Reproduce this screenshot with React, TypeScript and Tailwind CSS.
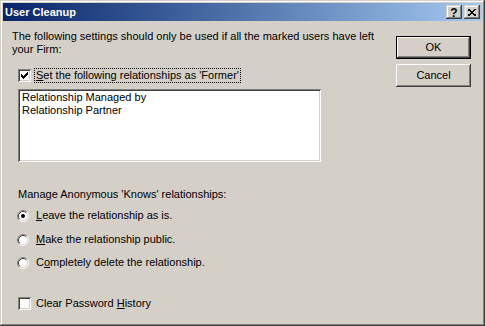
import React from "react";

const raised =
  "shadow-[inset_-1px_-1px_#404040,inset_1px_1px_#ffffff,inset_-2px_-2px_#808080,inset_2px_2px_#d4d0c8]";
const titleBtn =
  "shadow-[inset_-1px_-1px_#404040,inset_1px_1px_#d4d0c8,inset_-2px_-2px_#808080,inset_2px_2px_#ffffff]";
const sunken =
  "shadow-[inset_1px_1px_#808080,inset_-1px_-1px_#ffffff,inset_2px_2px_#404040,inset_-2px_-2px_#d4d0c8]";

const checkPixels = [
  "......x",
  ".....xx",
  "x...xxx",
  "xx.xxx.",
  "xxxxx..",
  ".xxx...",
  "..x....",
];

function CheckBox({ checked }: { checked?: boolean }) {
  return (
    <div className={`relative w-[13px] h-[13px] bg-white shrink-0 ${sunken}`}>
      {checked && (
        <svg width="13" height="13" className="absolute left-0 top-0" shapeRendering="crispEdges">
          {checkPixels.flatMap((row, y) =>
            row.split("").map((c, x) =>
              c === "x" ? <rect key={`${x}-${y}`} x={x + 3} y={y + 3} width="1" height="1" fill="#000" /> : null
            )
          )}
        </svg>
      )}
    </div>
  );
}

function Radio({ checked }: { checked?: boolean }) {
  return (
    <svg width="12" height="12" className="shrink-0">
      <circle cx="6" cy="6" r="5" fill="#fff" />
      <path d="M2.11 9.89 A5.5 5.5 0 0 1 9.89 2.11" stroke="#808080" strokeWidth="1" fill="none" />
      <path d="M9.89 2.11 A5.5 5.5 0 0 1 2.11 9.89" stroke="#ffffff" strokeWidth="1" fill="none" />
      <path d="M2.82 9.18 A4.5 4.5 0 0 1 9.18 2.82" stroke="#404040" strokeWidth="1" fill="none" />
      <path d="M9.18 2.82 A4.5 4.5 0 0 1 2.82 9.18" stroke="#d4d0c8" strokeWidth="1" fill="none" />
      {checked && <circle cx="6" cy="6" r="2" fill="#000" />}
    </svg>
  );
}

function RadioRow({ checked, children, className = "" }: { checked?: boolean; children: React.ReactNode; className?: string }) {
  return (
    <div className={`flex items-center h-[13px] ml-[5px] ${className}`}>
      <Radio checked={checked} />
      <span className="ml-[7px] leading-[13px]">{children}</span>
    </div>
  );
}

export default function App() {
  return (
    <div
      className="w-[485px] h-[326px] bg-[#d4d0c8] p-[3px] flex flex-col text-[11px] text-black shadow-[inset_-1px_-1px_#404040,inset_1px_1px_#d4d0c8,inset_-2px_-2px_#808080,inset_2px_2px_#ffffff]"
      style={{ fontFamily: '"Liberation Sans", Arial, sans-serif' }}
    >
      {/* Title bar */}
      <div className="h-[18px] flex items-center bg-linear-to-r from-[#0a246a] to-[#a6caf0] shrink-0">
        <span className="ml-[2px] text-white font-bold leading-[18px]">User Cleanup</span>
        <div className="ml-auto flex items-center gap-[2px] pr-[2px]">
          <div className={`w-[16px] h-[14px] bg-[#d4d0c8] flex items-center justify-center ${titleBtn}`}>
            <span className="font-bold text-[12px] leading-[12px] mt-[1px]">?</span>
          </div>
          <div className={`w-[16px] h-[14px] bg-[#d4d0c8] flex items-center justify-center ${titleBtn}`}>
            <svg width="8" height="7" shapeRendering="crispEdges">
              <path d="M0 0 L8 7 M8 0 L0 7" stroke="#000" strokeWidth="1.6" />
            </svg>
          </div>
        </div>
      </div>

      {/* Body */}
      <div className="flex flex-1">
        <div className="w-[393px] pl-[9px] pt-[9px] flex flex-col">
          <p className="leading-[13px]">
            The following settings should only be used if all the marked users have left
            <br />
            your Firm:
          </p>

          <div className="mt-[12px] ml-[6px] flex items-center h-[15px]">
            <CheckBox checked />
            <span className="ml-[3px] px-[1px] border border-dotted border-black leading-[13px]">
              <u>S</u>et the following relationships as &#39;Former&#39;
            </span>
          </div>

          <div className={`mt-[6px] ml-[6px] w-[303px] h-[73px] bg-white p-[2px] ${sunken}`}>
            <div className="px-[2px] leading-[13px]">Relationship Managed by</div>
            <div className="px-[2px] leading-[13px]">Relationship Partner</div>
          </div>

          <div className="mt-[26px] ml-[6px] leading-[13px]">Manage Anonymous &#39;Knows&#39; relationships:</div>

          <RadioRow checked className="mt-[8px]">
            <u>L</u>eave the relationship as is.
          </RadioRow>
          <RadioRow className="mt-[11px]">
            <u>M</u>ake the relationship public.
          </RadioRow>
          <RadioRow className="mt-[10px]">
            C<u>o</u>mpletely delete the relationship.
          </RadioRow>

          <div className="mt-[28px] ml-[6px] flex items-center h-[13px]">
            <CheckBox />
            <span className="ml-[5px] leading-[13px]">
              Clear Password <u>H</u>istory
            </span>
          </div>
        </div>

        <div className="pt-[15px] flex flex-col gap-[5px]">
          <div className="w-[75px] h-[23px] border border-black bg-[#d4d0c8]">
            <div className={`w-full h-full flex items-center justify-center ${raised}`}>OK</div>
          </div>
          <div className={`w-[75px] h-[23px] bg-[#d4d0c8] flex items-center justify-center ${raised}`}>Cancel</div>
        </div>
      </div>
    </div>
  );
}
